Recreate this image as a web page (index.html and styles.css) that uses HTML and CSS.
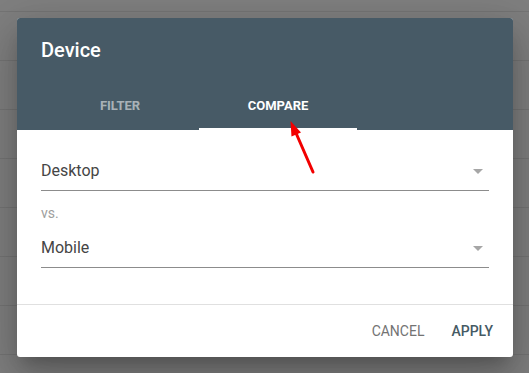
FILE: index.html
```html
<!DOCTYPE html>
<html lang="en">
<head>
    <meta charset="UTF-8">
    <meta name="viewport" content="width=device-width, initial-scale=1.0">
    <title>Device</title>
    <link rel="stylesheet" href="styles.css">
</head>
<body>
    <div class="dialog">
        <div class="dialog-header">
            <h2 class="dialog-title">Device</h2>
            <div class="tabs">
                <div class="tab">Filter</div>
                <div class="tab active">Compare</div>
            </div>
        </div>
        <div class="dialog-body">
            <div class="field">
                <span>Desktop</span>
                <span class="caret"></span>
            </div>
            <div class="vs">vs.</div>
            <div class="field">
                <span>Mobile</span>
                <span class="caret"></span>
            </div>
        </div>
        <div class="dialog-footer">
            <button class="btn">Cancel</button>
            <button class="btn primary">Apply</button>
        </div>
    </div>

    <!-- annotation arrow -->
    <svg class="arrow" width="529" height="373" viewBox="0 0 529 373">
        <line x1="313" y1="172" x2="296" y2="133" stroke="#f20000" stroke-width="3" stroke-linecap="round"/>
        <polygon points="290.5,121 301,132.5 291.5,136.5" fill="#f20000"/>
    </svg>
</body>
</html>
```

FILE: styles.css
```css
body {
    margin: 0;
    height: 373px;
    overflow: hidden;
    font-family: Roboto, "Liberation Sans", sans-serif;
    background-color: #7f7f7f;
    background-image: repeating-linear-gradient(to bottom, transparent 0, transparent 11px, #747474 11px, #747474 12px, transparent 12px, transparent 49px);
}
.dialog {
    width: 496px;
    margin: 18px 0 0 17px;
    background: #fff;
    border-radius: 3px;
    overflow: hidden;
    box-shadow: 0 11px 15px -7px rgba(0,0,0,0.2), 0 24px 38px 3px rgba(0,0,0,0.14), 0 9px 46px 8px rgba(0,0,0,0.12);
}
.dialog-header {
    background: #475a66;
    padding: 20px 24px 0;
}
.dialog-title {
    margin: 0 0 20px;
    font-size: 20px;
    line-height: 24px;
    font-weight: 500;
    color: #fff;
}
.tabs {
    display: flex;
}
.tab {
    width: 158px;
    height: 48px;
    box-sizing: border-box;
    display: flex;
    align-items: center;
    justify-content: center;
    font-size: 13px;
    font-weight: 700;
    text-transform: uppercase;
    color: rgba(255,255,255,0.55);
    border-bottom: 2px solid transparent;
}
.tab.active {
    color: #fff;
    border-bottom-color: #fff;
}
.dialog-body {
    padding: 29px 24px 36px;
    border-bottom: 1px solid #e0e0e0;
}
.field {
    display: flex;
    align-items: center;
    justify-content: space-between;
    font-size: 16px;
    line-height: 24px;
    color: #454545;
    padding-bottom: 7px;
    border-bottom: 1px solid #8c8c8c;
}
.caret {
    width: 0;
    height: 0;
    margin-right: 6px;
    border-left: 5px solid transparent;
    border-right: 5px solid transparent;
    border-top: 5px solid #a6a6a6;
}
.vs {
    margin: 12px 0 13px;
    font-size: 14px;
    line-height: 20px;
    color: #9e9e9e;
}
.dialog-footer {
    display: flex;
    justify-content: flex-end;
    gap: 11px;
    padding: 8px 12px;
}
.btn {
    height: 36px;
    padding: 0 8px;
    border: none;
    background: none;
    font-family: inherit;
    font-size: 14px;
    text-transform: uppercase;
    color: #737373;
    cursor: pointer;
}
.btn.primary {
    color: #455a64;
    font-weight: 500;
}
.arrow {
    position: absolute;
    left: 0;
    top: 0;
    pointer-events: none;
}
```
